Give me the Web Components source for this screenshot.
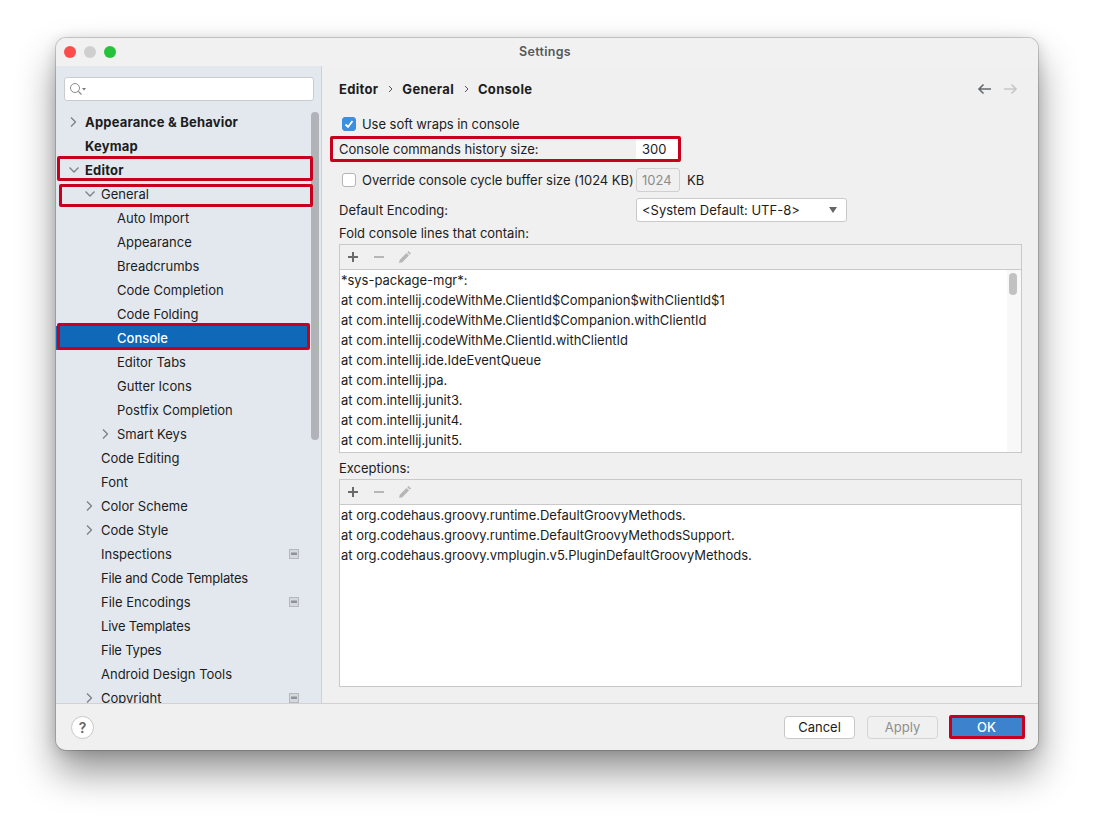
<!DOCTYPE html>
<html>
<head>
<meta charset="utf-8">
<title>Settings</title>
<style>
html, body { margin: 0; background: #fff; }
body { font: 13px "Inter", "Liberation Sans", sans-serif; color: #1c1c1c; width: 1094px; height: 824px; overflow: hidden; }
</style>
</head>
<body>
<settings-window>
  <settings-tree slot="side"></settings-tree>
  <console-page slot="main"></console-page>
</settings-window>

<script>
function icon(name) {
	if (name == 'right') return '<svg width="10" height="12" viewBox="0 0 10 12"><path d="M3 1.5 7.5 6 3 10.5" fill="none" stroke="#7c7f83" stroke-width="1.3"/></svg>';
	if (name == 'down') return '<svg width="12" height="10" viewBox="0 0 12 10"><path d="M1.5 2.5 6 7l4.500-4.500" fill="none" stroke="#7c7f83" stroke-width="1.3"/></svg>';
	if (name == 'badge') return '<svg width="10" height="10" viewBox="0 0 10 10"><rect x=".5" y=".5" width="9" height="9" fill="#d5d8dc" stroke="#b4b8bc"/><rect x="2" y="3.500" width="6" height="2.500" fill="#8f9397"/></svg>';
	return '';
}

class SettingsWindow extends HTMLElement {
	constructor() {
		super();
		this.attachShadow({mode: 'open'}).innerHTML = `
<style>
:host { display: block; position: absolute; left: 56px; top: 38px; width: 982px; height: 712px; }
.win { width: 982px; height: 712px; box-sizing: border-box; border-radius: 10px; background: #f0f0f0; overflow: hidden;
	display: grid; grid-template-rows: 28px 637px 47px; box-shadow: 0 0 0 1px rgba(0,0,0,.16); }
.shadow { position: absolute; inset: 0; border-radius: 10px; box-shadow: 0 22px 38px rgba(0,0,0,.42), 0 2px 14px rgba(0,0,0,.16); }
.title { position: relative; display: flex; align-items: center; justify-content: center; background: #f1f1f1; font-weight: 600; font-size: 12.500px; letter-spacing: .3px; color: #55585b; padding: 0 4px 2px 0; box-sizing: border-box; }
.lights { position: absolute; left: 8px; top: 8px; display: flex; gap: 8px; }
.lights i { width: 12px; height: 12px; border-radius: 50%; display: block; }
.body { display: grid; grid-template-columns: 266px 1fr; min-height: 0; }
.side { background: #e3e8ef; border-right: 1px solid #cfd2d5; overflow: hidden; min-height: 0; box-sizing: border-box; }
.main { min-height: 0; overflow: hidden; }
.foot { border-top: 1px solid #d2d2d2; display: flex; align-items: center; padding: 0 13px 0 15px; gap: 12px; box-sizing: border-box; }
.help { width: 21px; height: 21px; border-radius: 50%; background: #fff; border: 1px solid #c6c6c6; display: flex; align-items: center; justify-content: center; font-weight: 600; font-size: 14px; color: #666; margin-right: auto; }
</style>
<div class="shadow"></div>
<div class="win" style="position:relative">
  <div class="title">
    <div class="lights"><i style="background:#fc4d4d"></i><i style="background:#cfcfcf"></i><i style="background:#27c23b"></i></div>
    Settings
  </div>
  <div class="body">
    <div class="side"><slot name="side"></slot></div>
    <div class="main"><slot name="main"></slot></div>
  </div>
  <div class="foot">
    <div class="help">?</div>
    <dlg-button>Cancel</dlg-button>
    <dlg-button kind="off">Apply</dlg-button>
    <dlg-button kind="ok">OK</dlg-button>
  </div>
</div>
<red-mark x="1" y="118" w="256" h="25"></red-mark>
<red-mark x="3" y="146" w="254" h="23"></red-mark>
<red-mark x="1" y="285" w="253" h="27"></red-mark>
<red-mark x="274" y="98" w="351" h="26"></red-mark>
<red-mark x="893" y="677" w="76" h="24"></red-mark>`;
	}
}

class RedMark extends HTMLElement {
	connectedCallback() {
		this.style.left = this.getAttribute('x') + 'px';
		this.style.top = this.getAttribute('y') + 'px';
		this.style.width = this.getAttribute('w') + 'px';
		this.style.height = this.getAttribute('h') + 'px';
	}
	constructor() {
		super();
		this.attachShadow({mode: 'open'}).innerHTML = `
<style>
:host { display: block; position: absolute; box-sizing: border-box; border: 3px solid #c7001e; border-radius: 2px; pointer-events: none; }
</style>`;
	}
}

class DlgButton extends HTMLElement {
	constructor() {
		super();
		this.attachShadow({mode: 'open'}).innerHTML = `
<style>
:host { display: flex; align-items: center; justify-content: center; box-sizing: border-box; width: 71px; height: 23px; background: #fff; border: 1px solid #c8c8c8; border-radius: 4px; color: #1c1c1c; }
:host([kind="off"]) { background: #f0f0f0; color: #8e8e8e; border-color: #d4d4d4; }
:host([kind="ok"]) { background: #3d82cc; color: #fff; font-weight: 500; border-color: #3d82cc; width: 73px; margin-right: 2px; }
</style><slot></slot>`;
	}
}

class TreeRow extends HTMLElement {
	constructor() {
		super();
		var level = +this.getAttribute('level') || 0;
		var arrow = this.getAttribute('arrow');
		var badge = this.hasAttribute('badge');
		this.attachShadow({mode: 'open'}).innerHTML = `
<style>
:host { display: flex; align-items: center; height: 24px; padding-left: ${12 + level * 16}px; position: relative; }
:host([bold]) { font-weight: 700; letter-spacing: .2px; }
:host([tight]) { letter-spacing: -.2px; }
:host([selected]) { background: #0f68b8; color: #fff; font-weight: 500; margin-right: 13px; }
.a { width: 17px; height: 12px; display: flex; align-items: center; flex: none; }
.b { position: absolute; left: 233px; top: 7px; display: flex; }
</style>
<span class="a">${icon(arrow)}</span><slot></slot>${badge ? '<span class="b">' + icon('badge') + '</span>' : ''}`;
	}
}

class SettingsTree extends HTMLElement {
	constructor() {
		super();
		var rows = [
			[0, 'Appearance & Behavior', 'right', 'bold'],
			[0, 'Keymap', '', 'bold'],
			[0, 'Editor', 'down', 'bold'],
			[1, 'General', 'down'],
			[2, 'Auto Import'],
			[2, 'Appearance'],
			[2, 'Breadcrumbs'],
			[2, 'Code Completion'],
			[2, 'Code Folding'],
			[2, 'Console', '', 'selected'],
			[2, 'Editor Tabs'],
			[2, 'Gutter Icons'],
			[2, 'Postfix Completion'],
			[2, 'Smart Keys', 'right'],
			[1, 'Code Editing'],
			[1, 'Font'],
			[1, 'Color Scheme', 'right'],
			[1, 'Code Style', 'right'],
			[1, 'Inspections', '', 'badge'],
			[1, 'File and Code Templates', '', 'tight'],
			[1, 'File Encodings', '', 'badge'],
			[1, 'Live Templates', '', 'tight'],
			[1, 'File Types', '', 'tight'],
			[1, 'Android Design Tools'],
			[1, 'Copyright', 'right', 'badge']
		];
		var html = '';
		for (var i = 0; i < rows.length; i++) {
			var r = rows[i];
			html += '<tree-row level="' + r[0] + '" arrow="' + (r[2] || '') + '" ' + (r[3] || '') + '>' + r[1].replace('&', '&amp;') + '</tree-row>';
		}
		this.attachShadow({mode: 'open'}).innerHTML = `
<style>
:host { display: block; position: relative; height: 637px; overflow: hidden; }
.search { margin: 11px 7px 9px 8px; height: 24px; box-sizing: border-box; background: #fff; border: 1px solid #c9cccf; border-radius: 3px; display: flex; align-items: center; padding-left: 4px; }
.bar { position: absolute; left: 255px; top: 46px; width: 8px; height: 328px; border-radius: 4px; background: #b0b4b9; }
</style>
<div class="search">
  <svg width="18" height="14" viewBox="0 0 18 14"><circle cx="6" cy="6" r="4.500" fill="none" stroke="#8a8a8a" stroke-width="1"/><path d="M9.300 9.300 12.500 12.500" stroke="#8a8a8a" stroke-width="1.200"/><path d="M13 6h4l-2 2.500z" fill="#777"/></svg>
</div>
${html}
<div class="bar"></div>`;
	}
}

class CheckRow extends HTMLElement {
	constructor() {
		super();
		var on = this.hasAttribute('checked');
		this.attachShadow({mode: 'open'}).innerHTML = `
<style>
:host { display: inline-flex; align-items: center; gap: 6px; padding-left: 3px; letter-spacing: -.05px; white-space: nowrap; }
.c { width: 14px; height: 14px; box-sizing: border-box; border-radius: 3px; display: flex; background: #fff; border: 1px solid #b5b5b5; flex: none; }
.c.on { background: #3c8ee0; border-color: #3c8ee0; }
</style>
<span class="c ${on ? 'on' : ''}">${on ? '<svg width="12" height="12" viewBox="0 0 12 12"><path d="M2.500 6.500 5 9l4.500-6" fill="none" stroke="#fff" stroke-width="1.800"/></svg>' : ''}</span><span><slot></slot></span>`;
	}
}

class ListPanel extends HTMLElement {
	constructor() {
		super();
		var bar = this.hasAttribute('bar');
		this.attachShadow({mode: 'open'}).innerHTML = `
<style>
:host { display: flex; flex-direction: column; border: 1px solid #c9c9c9; box-sizing: border-box; position: relative; letter-spacing: -.02px; }
.tools { height: 25px; flex: none; border-bottom: 1px solid #c9c9c9; display: flex; align-items: center; gap: 8px; padding-left: 4px; box-sizing: border-box; }
.tools svg { display: block; }
.items { background: #fff; flex: 1; overflow: hidden; }
::slotted(div) { height: 20px; line-height: 20px; padding-left: 1px; white-space: nowrap; }
.gut { position: absolute; right: 0; top: 25px; bottom: 0; width: 14px; background: #f8f8f8; }
.thumb { position: absolute; left: 2px; top: 3px; width: 8px; height: 22px; border-radius: 4px; background: #c2c2c2; }
</style>
<div class="tools">
  <svg width="18" height="14" viewBox="0 0 18 14"><path d="M9 2v10M4 7h10" stroke="#6a6a6a" stroke-width="2"/></svg>
  <svg width="18" height="14" viewBox="0 0 18 14"><path d="M4 7h10" stroke="#b6b6b6" stroke-width="2"/></svg>
  <svg width="18" height="14" viewBox="0 0 18 14"><path d="M3 13l.8-3.200L10.500 3l2.500 2.500-6.700 6.700z" fill="#b6b6b6"/><path d="M11.300 2.200 12.500 1l2.500 2.500-1.200 1.200z" fill="#b6b6b6"/></svg>
</div>
<div class="items"><slot></slot></div>
${bar ? '<div class="gut"><div class="thumb"></div></div>' : ''}`;
	}
}

class ConsolePage extends HTMLElement {
	constructor() {
		super();
		this.attachShadow({mode: 'open'}).innerHTML = `
<style>
:host { display: block; height: 637px; box-sizing: border-box; padding: 0 16px 0 17px; }
.crumbs { height: 46px; display: flex; align-items: center; font-weight: 700; letter-spacing: .3px; box-sizing: border-box; position: relative; }
.crumbs svg.sep { margin: 0 8px 0 10px; }
.nav { margin-left: auto; display: flex; gap: 13px; margin-right: 4px; }
.row { display: grid; grid-template-columns: 297px auto 1fr; align-items: center; }
.input { box-sizing: border-box; height: 24px; width: 44px; padding-left: 6px; display: flex; align-items: center; }
.kb { padding-left: 7px; }
.sel { width: 211px; height: 24px; box-sizing: border-box; background: #fff; border: 1px solid #c9c9c9; border-radius: 3px; display: flex; align-items: center; padding: 0 9px 0 5px; justify-content: space-between; }
.sel i { width: 0; height: 0; border: 4.500px solid transparent; border-top: 6px solid #666; border-bottom: 0; }
.label { height: 19px; display: flex; align-items: center; }
</style>
<div class="crumbs">
  Editor
  <svg class="sep" width="6" height="10" viewBox="0 0 6 10"><path d="M1 2l3 3-3 3" fill="none" stroke="#555" stroke-width="1"/></svg>
  General
  <svg class="sep" width="6" height="10" viewBox="0 0 6 10"><path d="M1 2l3 3-3 3" fill="none" stroke="#555" stroke-width="1"/></svg>
  Console
  <span class="nav">
    <svg width="14" height="12" viewBox="0 0 14 12"><path d="M14 6H2M6.500 1.500 2 6l4.500 4.500" fill="none" stroke="#66696c" stroke-width="1.600"/></svg>
    <svg width="14" height="12" viewBox="0 0 14 12"><path d="M0 6h12M7.500 1.500 12 6l-4.500 4.500" fill="none" stroke="#c4c6c8" stroke-width="1.600"/></svg>
  </span>
</div>
<div style="height:24px;display:flex;align-items:center"><check-row checked>Use soft wraps in console</check-row></div>
<div class="row" style="height:26px"><span>Console commands history size:</span><span class="input" style="background:#fff;height:22px">300</span></div>
<div class="row" style="height:36px">
  <check-row>Override console cycle buffer size (1024 KB)</check-row>
  <span class="input" style="border:1px solid #d0d0d0;border-radius:3px;color:#8c8c8c;padding-left:5px;background:#f0f0f0">1024</span>
  <span class="kb">KB</span>
</div>
<div class="row" style="height:24px"><span>Default Encoding:</span><span class="sel"><span>&lt;System Default: UTF-8&gt;</span><i></i></span></div>
<div class="label" style="margin-top:1px;margin-bottom:2px">Fold console lines that contain:</div>
<list-panel bar style="height:209px">
  <div>*sys-package-mgr*:</div>
  <div>at com.intellij.codeWithMe.ClientId$Companion$withClientId$1</div>
  <div>at com.intellij.codeWithMe.ClientId$Companion.withClientId</div>
  <div>at com.intellij.codeWithMe.ClientId.withClientId</div>
  <div>at com.intellij.ide.IdeEventQueue</div>
  <div>at com.intellij.jpa.</div>
  <div>at com.intellij.junit3.</div>
  <div>at com.intellij.junit4.</div>
  <div>at com.intellij.junit5.</div>
</list-panel>
<div class="label" style="height:26px;padding-top:3px;box-sizing:border-box">Exceptions:</div>
<list-panel style="height:208px">
  <div>at org.codehaus.groovy.runtime.DefaultGroovyMethods.</div>
  <div>at org.codehaus.groovy.runtime.DefaultGroovyMethodsSupport.</div>
  <div>at org.codehaus.groovy.vmplugin.v5.PluginDefaultGroovyMethods.</div>
</list-panel>`;
	}
}

customElements.define('red-mark', RedMark);
customElements.define('dlg-button', DlgButton);
customElements.define('tree-row', TreeRow);
customElements.define('check-row', CheckRow);
customElements.define('list-panel', ListPanel);
customElements.define('settings-tree', SettingsTree);
customElements.define('console-page', ConsolePage);
customElements.define('settings-window', SettingsWindow);
</script>
</body>
</html>
